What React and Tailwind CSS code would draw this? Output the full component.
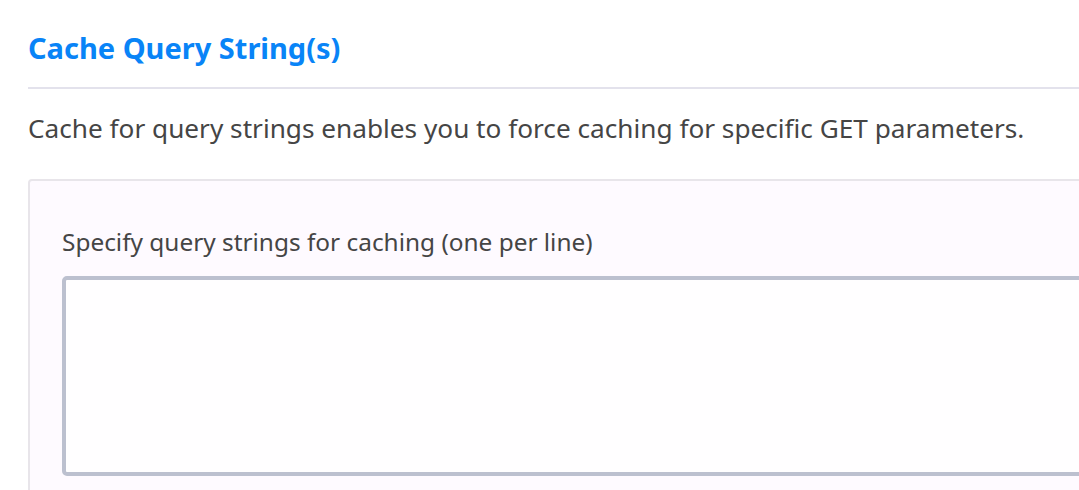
export default function App() {
  return (
    <div className="w-[1079px] h-[490px] overflow-hidden bg-white font-['Noto_Sans',sans-serif]">
      <div className="w-[1300px] pl-[28px] pt-[28px]">
        {/* Section title */}
        <h2 className="text-[29px] leading-[40px] font-bold text-[#0984f7] pb-[19px] border-b-2 border-[#e3e2ec]">
          Cache Query String(s)
        </h2>
        <p className="mt-[21px] text-[26.2px] leading-[36px] text-[#454545]">
          Cache for query strings enables you to force caching for specific GET parameters.
        </p>

        {/* Settings card */}
        <div className="mt-[33px] rounded-[4px] border-2 border-[#e8e5ea] bg-[#fefaff] px-[32px] pt-[44px] pb-[40px]">
          <label className="block text-[24.4px] leading-[34px] text-[#454545] mb-[17px]">
            Specify query strings for caching (one per line)
          </label>
          <textarea className="block w-full h-[200px] rounded-[5px] border-4 border-[#bcc0cf] bg-[#fffeff] resize-none outline-none" />
        </div>
      </div>
    </div>
  );
}
